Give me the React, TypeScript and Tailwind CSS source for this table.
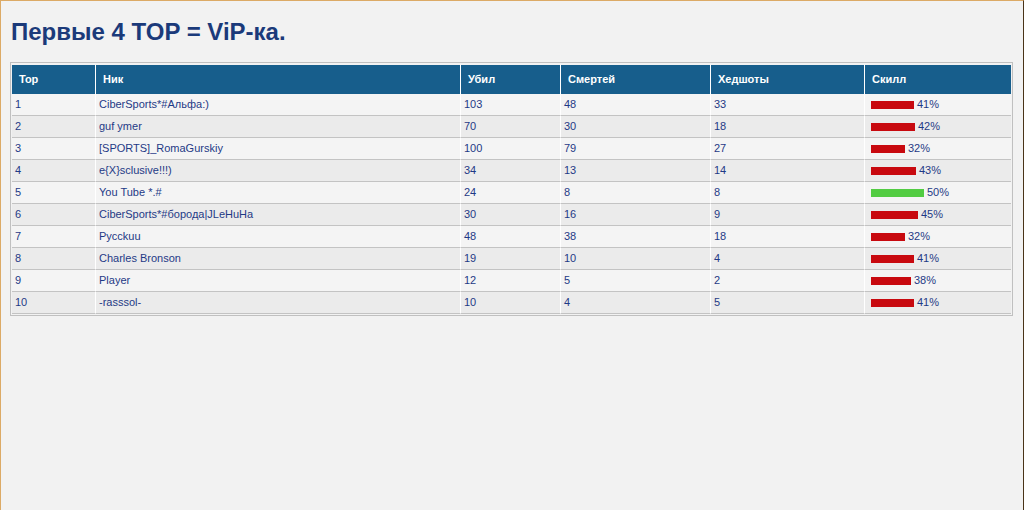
const rows = [
  { top: 1, nick: 'CiberSports*#Альфа:)', kills: 103, deaths: 48, hs: 33, skill: 41 },
  { top: 2, nick: 'guf ymer', kills: 70, deaths: 30, hs: 18, skill: 42 },
  { top: 3, nick: '[SPORTS]_RomaGurskiy', kills: 100, deaths: 79, hs: 27, skill: 32 },
  { top: 4, nick: 'e{X}sclusive!!!)', kills: 34, deaths: 13, hs: 14, skill: 43 },
  { top: 5, nick: 'You Tube *.#', kills: 24, deaths: 8, hs: 8, skill: 50 },
  { top: 6, nick: 'CiberSports*#борода|JLeHuHa', kills: 30, deaths: 16, hs: 9, skill: 45 },
  { top: 7, nick: 'Pycckuu', kills: 48, deaths: 38, hs: 18, skill: 32 },
  { top: 8, nick: 'Charles Bronson', kills: 19, deaths: 10, hs: 4, skill: 41 },
  { top: 9, nick: 'Player', kills: 12, deaths: 5, hs: 2, skill: 38 },
  { top: 10, nick: '-rasssol-', kills: 10, deaths: 4, hs: 5, skill: 41 },
];

const headers = [
  { label: 'Top', w: 'w-[84px]' },
  { label: 'Ник', w: 'w-[365px]' },
  { label: 'Убил', w: 'w-[100px]' },
  { label: 'Смертей', w: 'w-[150px]' },
  { label: 'Хедшоты', w: 'w-[154px]' },
  { label: 'Скилл', w: '' },
];

export default function App() {
  return (
    <div className="h-[510px] bg-[#f2f2f2] border-t border-l border-r border-t-[#dcaa66] border-l-[#dcaa66] border-r-[#4a3418] font-['Liberation_Sans',Arial,sans-serif] overflow-hidden">
      <h1 className="pl-[10px] pt-[16px] h-[61px] text-[24px] font-bold text-[#1b3a7a] leading-[30px]">
        Первые 4 TOP = ViP-ка.
      </h1>
      <div className="ml-[9px] mr-[10px] border border-[#c0c0c0] p-[1px]">
        <table className="w-full border-separate border-spacing-0 text-[11px] table-fixed">
          <thead>
            <tr className="h-[30px]">
              {headers.map((h, i) => (
                <th
                  key={h.label}
                  className={`${h.w} bg-[#175e8c] text-white font-bold text-left pl-[7px] border-t border-t-[#f2f2f2] ${i < 5 ? 'border-r border-r-white' : ''}`}
                >
                  {h.label}
                </th>
              ))}
            </tr>
          </thead>
          <tbody className="text-[#1f3a86]">
            {rows.map((r, idx) => {
              const bg = idx % 2 === 0 ? 'bg-[#f4f4f4]' : 'bg-[#ebebeb]';
              const cell = `${bg} pl-[3px] border-b border-b-[#c3c3c3]`;
              const sep = 'border-r border-r-white';
              return (
                <tr key={r.top} className="h-[22px]">
                  <td className={`${cell} ${sep}`}>{r.top}</td>
                  <td className={`${cell} ${sep}`}>{r.nick}</td>
                  <td className={`${cell} ${sep}`}>{r.kills}</td>
                  <td className={`${cell} ${sep}`}>{r.deaths}</td>
                  <td className={`${cell} ${sep}`}>{r.hs}</td>
                  <td className={`${cell} pl-[6px]`}>
                    <div className="flex items-center gap-[3px]">
                      <span
                        className={`inline-block h-[8px] ${r.skill >= 50 ? 'bg-[#52cc42]' : 'bg-[#c8090f]'}`}
                        style={{ width: Math.round(r.skill * 1.05) }}
                      />
                      <span>{r.skill}%</span>
                    </div>
                  </td>
                </tr>
              );
            })}
          </tbody>
        </table>
      </div>
    </div>
  );
}
